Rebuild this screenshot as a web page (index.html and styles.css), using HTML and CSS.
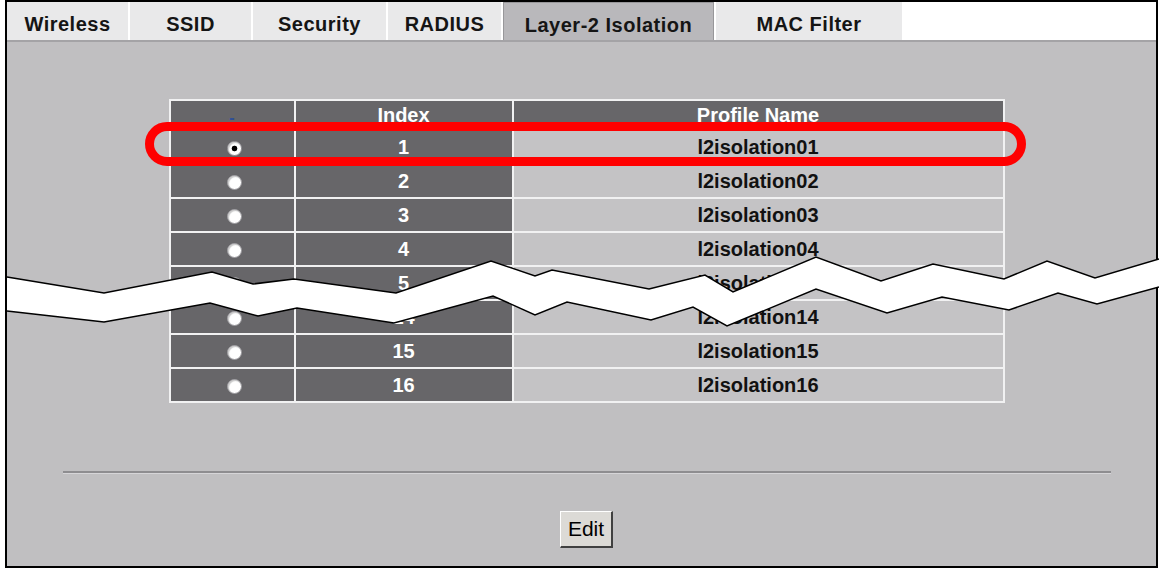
FILE: index.html
```html
<!DOCTYPE html>
<html lang="en">

<head>
    <meta charset="UTF-8">
    <meta name="viewport" content="width=device-width, initial-scale=1.0">
    <title>Layer-2 Isolation</title>
    <link rel="stylesheet" href="styles.css">
</head>

<body>
    <div class="frame">
        <!-- tab bar -->
        <div class="tabs">
            <div class="tab w-wireless">Wireless</div>
            <div class="tab w-ssid">SSID</div>
            <div class="tab w-security">Security</div>
            <div class="tab w-radius">RADIUS</div>
            <div class="tab w-isolation active">Layer-2 Isolation</div>
            <div class="tab w-mac">MAC Filter</div>
        </div>

        <div class="content">
            <table class="profiles">
                <thead>
                    <tr>
                        <th class="c-sel"><span class="dash">-</span></th>
                        <th class="c-idx">Index</th>
                        <th class="c-name">Profile Name</th>
                    </tr>
                </thead>
                <tbody>
                    <tr>
                        <td class="c-sel"><input type="radio" name="profile" checked></td>
                        <td class="c-idx">1</td>
                        <td class="c-name">l2isolation01</td>
                    </tr>
                    <tr>
                        <td class="c-sel"><input type="radio" name="profile"></td>
                        <td class="c-idx">2</td>
                        <td class="c-name">l2isolation02</td>
                    </tr>
                    <tr>
                        <td class="c-sel"><input type="radio" name="profile"></td>
                        <td class="c-idx">3</td>
                        <td class="c-name">l2isolation03</td>
                    </tr>
                    <tr>
                        <td class="c-sel"><input type="radio" name="profile"></td>
                        <td class="c-idx">4</td>
                        <td class="c-name">l2isolation04</td>
                    </tr>
                    <tr>
                        <td class="c-sel"><input type="radio" name="profile"></td>
                        <td class="c-idx">5</td>
                        <td class="c-name">l2isolation05</td>
                    </tr>
                    <tr>
                        <td class="c-sel"><input type="radio" name="profile"></td>
                        <td class="c-idx">14</td>
                        <td class="c-name">l2isolation14</td>
                    </tr>
                    <tr>
                        <td class="c-sel"><input type="radio" name="profile"></td>
                        <td class="c-idx">15</td>
                        <td class="c-name">l2isolation15</td>
                    </tr>
                    <tr>
                        <td class="c-sel"><input type="radio" name="profile"></td>
                        <td class="c-idx">16</td>
                        <td class="c-name">l2isolation16</td>
                    </tr>
                </tbody>
            </table>

            <div class="rule"></div>

            <div class="actions">
                <button class="btn">Edit</button>
            </div>
        </div>
    </div>

    <!-- annotation: highlight loop and the "rows skipped" break -->
    <svg class="overlay" width="1159" height="573" viewBox="0 0 1159 573">
        <rect x="149.5" y="126.5" width="872" height="35" rx="17.5" fill="none" stroke="#ff0000" stroke-width="9" />
        <polygon fill="#ffffff" points="7,277 104,293 212,272 253,284 294,279 396,293 491,261 535,276 552,270 649,289 705,275 733,292 816,257 881,281 933,264 1004,279 1047,261 1095,278 1159,259
            1159,287 1097,304 1058,293 1009,310 942,297 887,313 816,289 727,326 693,307 651,320 567,302 535,315 493,296 394,323 297,308 258,316 210,303 104,322 7,311" />
        <polyline fill="none" stroke="#000" stroke-width="1.5" points="7,277 104,293 212,272 253,284 294,279 396,293 491,261 535,276 552,270 649,289 705,275 733,292 816,257 881,281 933,264 1004,279 1047,261 1095,278 1159,259" />
        <polyline fill="none" stroke="#000" stroke-width="1.5" points="7,311 104,322 210,303 258,316 297,308 394,323 493,296 535,315 567,302 651,320 693,307 727,326 816,289 887,313 942,297 1009,310 1058,293 1097,304 1159,287" />
    </svg>
</body>

</html>
```

FILE: styles.css
```css
body {
    margin: 0;
    padding: 0;
    background: #ffffff;
    font-family: "Liberation Sans", Arial, sans-serif;
    position: relative;
    width: 1159px;
    height: 573px;
    overflow: hidden;
}

.frame {
    box-sizing: border-box;
    width: 1153px;
    height: 568px;
    margin-left: 5px;
    border: 2px solid #000000;
    display: flex;
    flex-direction: column;
    background: #c0bfc1;
}

/* tabs */
.tabs {
    display: flex;
    gap: 2px;
    height: 38px;
    background: #ffffff;
    border-bottom: 2px solid #a4a3a6;
}

.tab {
    box-sizing: border-box;
    height: 38px;
    padding-top: 7px;
    line-height: 30px;
    text-align: center;
    font-size: 20px;
    font-weight: bold;
    letter-spacing: 0.5px;
    color: #151515;
    background: #e9e9ea;
}

.tab.active {
    background: #b9b8bb;
    border: 1px solid #98979a;
    border-bottom: 0;
}

.w-wireless { width: 121px; }
.w-ssid { width: 121px; }
.w-security { width: 133px; }
.w-radius { width: 113px; }
.w-isolation { width: 211px; }
.w-mac { width: 186px; }

/* content */
.content {
    flex: 1;
    padding-left: 10px;
    display: flex;
    flex-direction: column;
    align-items: center;
}

.profiles {
    width: 836px;
    margin-top: 57px;
    border-collapse: separate;
    border-spacing: 2px;
    background: #f1f1f2;
    table-layout: fixed;
    font-size: 20px;
    font-weight: bold;
}

.profiles th,
.profiles td {
    padding: 0;
    text-align: center;
}

.profiles th {
    height: 27px;
    line-height: 27px;
    background: #676669;
    color: #ffffff;
}

.profiles td {
    height: 32px;
    line-height: 32px;
}

.c-sel { width: 123px; }
.c-idx { width: 216px; }

td.c-sel,
td.c-idx {
    background: #676669;
    color: #ffffff;
}

td.c-name {
    background: #c4c3c5;
    color: #111111;
}

.dash {
    color: #2f4f96;
    font-size: 16px;
    position: relative;
    top: 2px;
}

.profiles input[type="radio"] {
    -webkit-appearance: none;
    appearance: none;
    box-sizing: border-box;
    width: 15px;
    height: 15px;
    margin: 0 0 0 4px;
    vertical-align: middle;
    border-radius: 50%;
    border: 1px solid #9a999d;
    background: #ffffff;
    box-shadow: inset 1px 1px 1px #c8c8c8;
}

.profiles input[type="radio"]:checked {
    background: radial-gradient(circle, #000000 0 2.5px, #ffffff 3.2px);
}

.rule {
    width: 1048px;
    margin-top: 68px;
    border-top: 2px solid #8e8d90;
    border-bottom: 1px solid #d6d5d8;
}

.actions {
    margin-top: 37px;
}

.btn {
    box-sizing: border-box;
    width: 53px;
    height: 37px;
    padding: 0;
    font-family: "Liberation Sans", Arial, sans-serif;
    font-size: 21px;
    color: #000000;
    background: #dcdad6;
    border-style: solid;
    border-width: 1px 2px 2px 1px;
    border-color: #ffffff #404040 #404040 #ffffff;
}

/* annotation drawn over the page */
.overlay {
    position: absolute;
    top: 0;
    left: 0;
    pointer-events: none;
}
```
